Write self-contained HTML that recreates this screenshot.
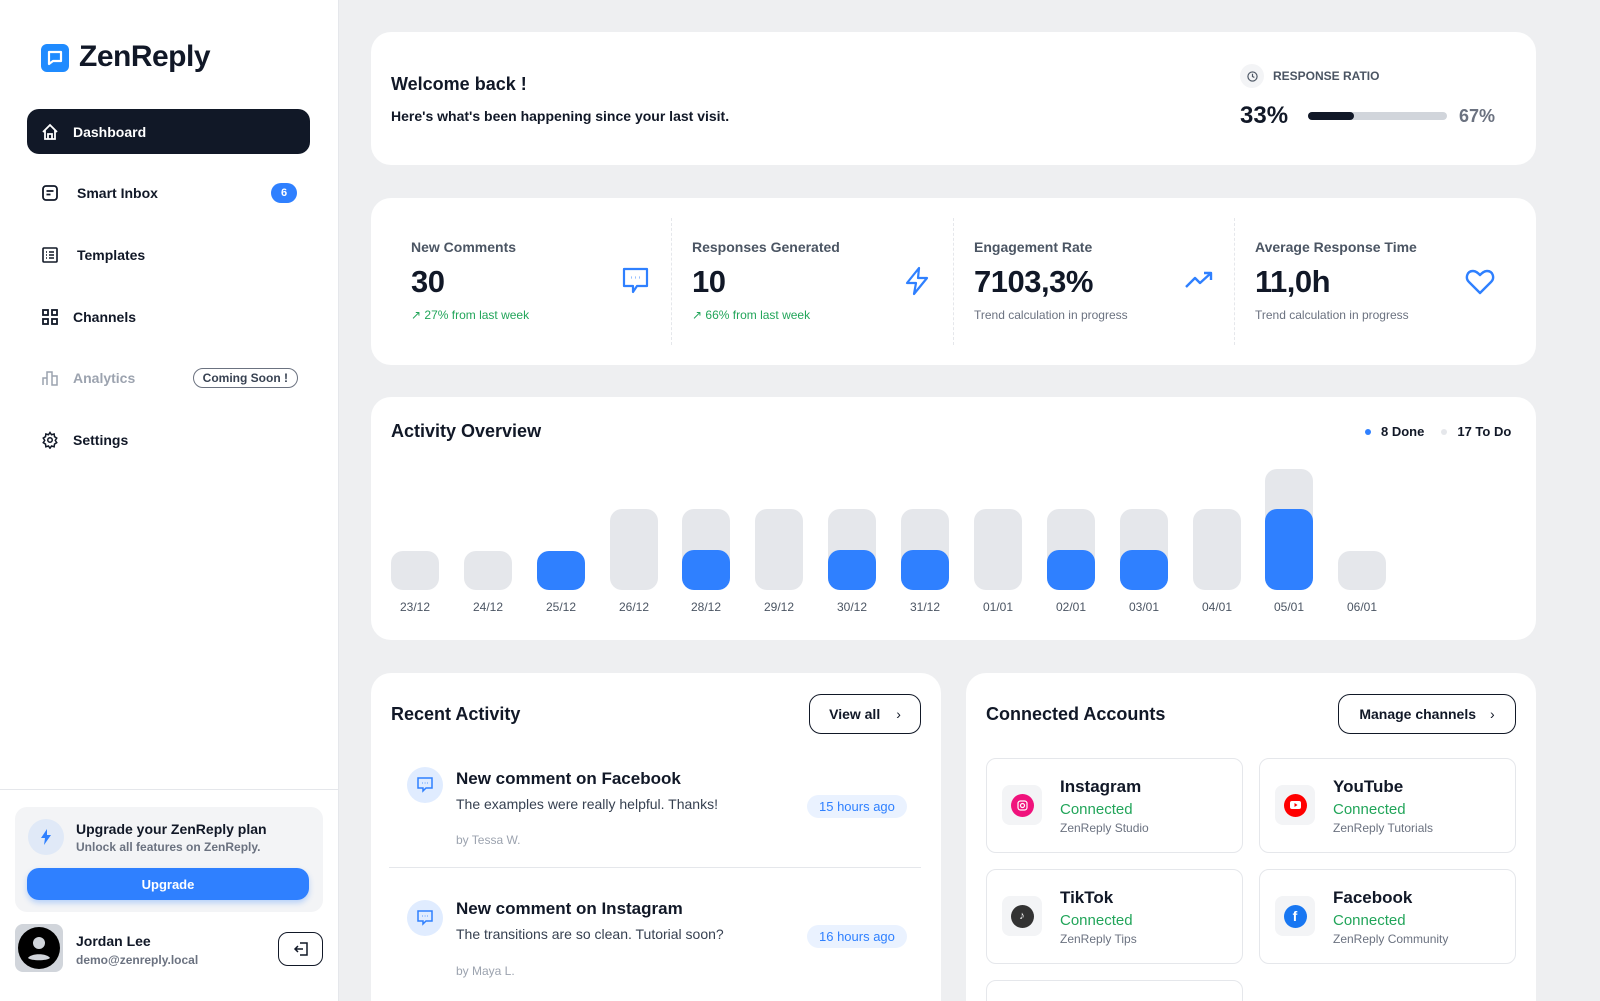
<!DOCTYPE html>
<html style="width:1600px;height:1001px;overflow:hidden"><head><meta charset="utf-8"><style>
*{box-sizing:border-box;margin:0;padding:0}
body{width:1600px;height:1001px;overflow:hidden;background:#eeeff1;font-family:"Liberation Sans",sans-serif;color:#111827;position:relative}
.abs{position:absolute}
.side{left:0;top:0;width:339px;height:1001px;background:#fff;border-right:1px solid #e5e7eb}
.nav{left:27px;width:283px;height:45px;display:flex;align-items:center;font-size:14px;font-weight:bold;color:#111827}
.nav svg{margin:0 14px 0 14px}
.card{background:#fff;border-radius:20px;position:absolute;overflow:hidden}
.h{font-weight:bold;font-size:18px}
.lbl{font-size:14px;color:#4b5563;font-weight:bold}
.big{font-size:31px;font-weight:bold;letter-spacing:-0.5px}
.grn{font-size:12px;color:#22a55a}
.gry{font-size:12px;color:#9ca3af}
.bar{position:absolute;width:48px;border-radius:12px;background:#e5e7eb}
.blue{background:#2f80ff}
.dl{position:absolute;top:600px;width:48px;text-align:center;font-size:12px;color:#4b5563}
.btn{position:absolute;border:1.5px solid #111827;border-radius:12px;height:40px;display:flex;align-items:center;justify-content:center;font-size:14px;font-weight:bold}
.acc{position:absolute;width:257px;height:95px;border:1px solid #e5e7eb;border-radius:10px;background:#fff}
.acc .ic{position:absolute;left:15px;top:26px;width:40px;height:40px;border-radius:8px;background:#f3f4f6;display:flex;align-items:center;justify-content:center}
.acc .t{position:absolute;left:73px;top:18px;font-size:17px;font-weight:bold}
.acc .c{position:absolute;left:73px;top:42px;font-size:15px;color:#22a55a}
.acc .s{position:absolute;left:73px;top:62px;font-size:12px;color:#6b7280}
.dot{width:23px;height:23px;border-radius:50%;display:flex;align-items:center;justify-content:center}
.ra{position:absolute;left:36px;width:36px;height:36px;border-radius:50%;background:#e0ecff;display:flex;align-items:center;justify-content:center}
.pill{position:absolute;left:436px;padding:4px 12px;background:#eaf2ff;color:#2f80ff;border-radius:12px;font-size:13px}
</style></head><body>
<div class="abs side">
 <div class="abs" style="left:41px;top:44px;width:28px;height:28px;border-radius:6px;background:#1f8bff;display:flex;align-items:center;justify-content:center"><svg width="18" height="18" viewBox="0 0 18 18"><path d="M3 3h12v9H7l-4 3z" fill="none" stroke="#fff" stroke-width="2.2" stroke-linejoin="round"/></svg></div>
 <div class="abs" style="left:79px;top:40px;font-size:30px;font-weight:bold;letter-spacing:-0.5px">ZenReply</div>
 <div class="abs nav" style="top:109px;background:#111827;border-radius:12px;color:#fff"><svg width="18" height="18" viewBox="0 0 18 18" fill="none" stroke="#fff" stroke-width="1.8"><path d="M2 9L9 2l7 7M4 7v9h10V7M7 16v-5h4v5"/></svg>Dashboard</div>
 <div class="abs nav" style="top:170px"><svg width="18" height="18" viewBox="0 0 18 18" fill="none" stroke="#111827" stroke-width="1.8"><rect x="2" y="2" width="14" height="14" rx="3"/><path d="M5.5 7h7M5.5 10.5h4"/></svg><span style="margin-left:4px">Smart Inbox</span><span style="position:absolute;right:13px;width:26px;height:20px;border-radius:10px;background:#2f80ff;color:#fff;font-size:11px;display:flex;align-items:center;justify-content:center">6</span></div>
 <div class="abs nav" style="top:232px"><svg width="18" height="18" viewBox="0 0 18 18" fill="none" stroke="#111827" stroke-width="1.6"><rect x="2" y="2" width="14" height="14" rx="1"/><path d="M5 6h1M8 6h5M5 9h1M8 9h5M5 12h1M8 12h5"/></svg><span style="margin-left:4px">Templates</span></div>
 <div class="abs nav" style="top:294px"><svg width="18" height="18" viewBox="0 0 18 18" fill="none" stroke="#111827" stroke-width="1.8"><rect x="2" y="2" width="5" height="5"/><rect x="11" y="2" width="5" height="5"/><rect x="2" y="11" width="5" height="5"/><rect x="11" y="11" width="5" height="5"/></svg>Channels</div>
 <div class="abs nav" style="top:355px;color:#9ca3af"><svg width="18" height="18" viewBox="0 0 18 18" fill="none" stroke="#9ca3af" stroke-width="1.5"><path d="M2 16V9h4v7M6 16V3h5v13M11 16V7h5v9z"/></svg>Analytics<span style="position:absolute;right:12px;border:1.2px solid #6b7280;border-radius:11px;padding:2px 9px;font-size:12px;color:#374151">Coming Soon !</span></div>
 <div class="abs nav" style="top:417px"><svg width="18" height="18" viewBox="0 0 24 24" fill="none" stroke="#111827" stroke-width="2"><circle cx="12" cy="12" r="3"/><path d="M12 2l2 3 3.5-1 .5 3.5 3 2-2 3 2 3-3 2-.5 3.5-3.5-1-2 3-2-3-3.5 1-.5-3.5-3-2 2-3-2-3 3-2 .5-3.5 3.5 1z"/></svg>Settings</div>
 <div class="abs" style="left:0;top:789px;width:339px;height:1px;background:#e5e7eb"></div>
 <div class="abs" style="left:15px;top:807px;width:308px;height:105px;background:#f3f4f6;border-radius:12px">
  <div class="abs" style="left:13px;top:12px;width:36px;height:36px;border-radius:50%;background:#e0e9f7;display:flex;align-items:center;justify-content:center"><svg width="12" height="16" viewBox="0 0 12 16"><path d="M7 0L1 9h4l-1 7 7-10H7z" fill="#2f80ff"/></svg></div>
  <div class="abs" style="left:61px;top:14px;font-size:14px;font-weight:bold">Upgrade your ZenReply plan</div>
  <div class="abs" style="left:61px;top:33px;font-size:12px;color:#6b7280;font-weight:bold">Unlock all features on ZenReply.</div>
  <div class="abs" style="left:12px;top:61px;width:282px;height:32px;border-radius:12px;background:#2f80ff;color:#fff;font-size:13px;font-weight:bold;display:flex;align-items:center;justify-content:center;box-shadow:0 3px 6px rgba(47,128,255,.3)">Upgrade</div>
 </div>
 <div class="abs" style="left:15px;top:924px;width:48px;height:48px;border-radius:8px;background:#d1d5db;display:flex;align-items:center;justify-content:center"><svg width="42" height="42" viewBox="0 0 42 42"><circle cx="21" cy="21" r="21" fill="#000"/><circle cx="21" cy="16" r="6" fill="#d1d5db"/><path d="M10 31c3-5 19-5 22 0c-3 3-19 3-22 0z" fill="#d1d5db"/></svg></div>
 <div class="abs" style="left:76px;top:933px;font-size:14px;font-weight:bold">Jordan Lee</div>
 <div class="abs" style="left:76px;top:953px;font-size:12px;color:#6b7280;font-weight:bold">demo@zenreply.local</div>
 <div class="abs" style="left:278px;top:932px;width:45px;height:34px;border:1.3px solid #111827;border-radius:10px;display:flex;align-items:center;justify-content:center"><svg width="16" height="16" viewBox="0 0 16 16" fill="none" stroke="#111827" stroke-width="1.5"><path d="M7 2h7v12H7M10 8H2M5 5L2 8l3 3"/></svg></div>
</div>

<div class="card" style="left:371px;top:32px;width:1165px;height:133px">
 <div class="abs h" style="left:20px;top:42px;font-size:18px">Welcome back !</div>
 <div class="abs" style="left:20px;top:76px;font-size:14px;font-weight:bold">Here's what's been happening since your last visit.</div>
 <div class="abs" style="left:869px;top:32px;width:24px;height:24px;border-radius:50%;background:#f3f4f6;display:flex;align-items:center;justify-content:center"><svg width="11" height="11" viewBox="0 0 12 12" fill="none" stroke="#4b5563" stroke-width="1.3"><circle cx="6" cy="6" r="5"/><path d="M6 3v3l2 1"/></svg></div>
 <div class="abs" style="left:902px;top:37px;font-size:12px;font-weight:bold;color:#4b5563">RESPONSE RATIO</div>
 <div class="abs" style="left:869px;top:70px;font-size:24px;font-weight:bold">33%</div>
 <div class="abs" style="left:937px;top:80px;width:139px;height:8px;border-radius:4px;background:#d1d5db"><div style="width:46px;height:8px;border-radius:4px;background:#111827"></div></div>
 <div class="abs" style="left:1088px;top:74px;font-size:18px;font-weight:bold;color:#6b7280">67%</div>
</div>

<div class="card" style="left:371px;top:198px;width:1165px;height:167px">
 <div class="abs" style="left:300px;top:20px;height:127px;border-left:1px dashed #e5e7eb"></div>
 <div class="abs" style="left:582px;top:20px;height:127px;border-left:1px dashed #e5e7eb"></div>
 <div class="abs" style="left:863px;top:20px;height:127px;border-left:1px dashed #e5e7eb"></div>
 <div class="abs lbl" style="left:40px;top:41px">New Comments</div><div class="abs big" style="left:40px;top:66px">30</div><div class="abs grn" style="left:40px;top:110px">↗ 27% from last week</div>
 <svg class="abs" style="left:250px;top:68px" width="29" height="30" viewBox="0 0 29 30" fill="none" stroke="#2f80ff" stroke-width="2.2" stroke-linejoin="round"><path d="M3 3h23v17H16l-4 6v-6H3z"/><path d="M10 11.5h.5M14.3 11.5h.5M18.5 11.5h.5"/></svg>
 <div class="abs lbl" style="left:321px;top:41px">Responses Generated</div><div class="abs big" style="left:321px;top:66px">10</div><div class="abs grn" style="left:321px;top:110px">↗ 66% from last week</div>
 <svg class="abs" style="left:533px;top:68px" width="26" height="30" viewBox="0 0 26 30" fill="none" stroke="#2f80ff" stroke-width="2.2" stroke-linejoin="round"><path d="M15 2L3 17h9l-2 11 13-16h-9z"/></svg>
 <div class="abs lbl" style="left:603px;top:41px">Engagement Rate</div><div class="abs big" style="left:603px;top:66px">7103,3%</div><div class="abs gry" style="left:603px;top:110px;color:#6b7280">Trend calculation in progress</div>
 <svg class="abs" style="left:813px;top:72px" width="30" height="20" viewBox="0 0 30 20" fill="none" stroke="#2f80ff" stroke-width="2.4" stroke-linejoin="round"><path d="M2 17l9-9 5 5 11-10M20 3h7v7"/></svg>
 <div class="abs lbl" style="left:884px;top:41px">Average Response Time</div><div class="abs big" style="left:884px;top:66px">11,0h</div><div class="abs gry" style="left:884px;top:110px;color:#6b7280">Trend calculation in progress</div>
 <svg class="abs" style="left:1094px;top:70px" width="30" height="27" viewBox="0 0 30 27" fill="none" stroke="#2f80ff" stroke-width="2.4" stroke-linejoin="round"><path d="M15 25L4 14C0 10 2 3 8 3c3 0 5 2 7 4 2-2 4-4 7-4 6 0 8 7 4 11z"/></svg>
</div>

<div class="card" style="left:371px;top:397px;width:1165px;height:243px"></div>
<div class="abs h" style="left:391px;top:421px">Activity Overview</div>
<div class="abs" style="left:1365px;top:424px;font-size:13px;font-weight:bold;display:flex;align-items:center"><span style="width:6px;height:6px;border-radius:50%;background:#2f80ff;margin-right:10px"></span>8 Done<span style="width:6px;height:6px;border-radius:50%;background:#e5e7eb;margin:0 10px 0 17px"></span>17 To Do</div>
<div class="bar" style="left:391px;top:551px;height:39px"></div>
<div class="bar" style="left:464px;top:551px;height:39px"></div>
<div class="bar blue" style="left:537px;top:551px;height:39px"></div>
<div class="bar" style="left:610px;top:509px;height:81px"></div>
<div class="bar" style="left:682px;top:509px;height:81px"></div><div class="bar blue" style="left:682px;top:550px;height:40px"></div>
<div class="bar" style="left:755px;top:509px;height:81px"></div>
<div class="bar" style="left:828px;top:509px;height:81px"></div><div class="bar blue" style="left:828px;top:550px;height:40px"></div>
<div class="bar" style="left:901px;top:509px;height:81px"></div><div class="bar blue" style="left:901px;top:550px;height:40px"></div>
<div class="bar" style="left:974px;top:509px;height:81px"></div>
<div class="bar" style="left:1047px;top:509px;height:81px"></div><div class="bar blue" style="left:1047px;top:550px;height:40px"></div>
<div class="bar" style="left:1120px;top:509px;height:81px"></div><div class="bar blue" style="left:1120px;top:550px;height:40px"></div>
<div class="bar" style="left:1193px;top:509px;height:81px"></div>
<div class="bar" style="left:1265px;top:469px;height:121px"></div><div class="bar blue" style="left:1265px;top:509px;height:81px"></div>
<div class="bar" style="left:1338px;top:551px;height:39px"></div>
<div class="dl" style="left:391px">23/12</div><div class="dl" style="left:464px">24/12</div><div class="dl" style="left:537px">25/12</div><div class="dl" style="left:610px">26/12</div><div class="dl" style="left:682px">28/12</div><div class="dl" style="left:755px">29/12</div><div class="dl" style="left:828px">30/12</div><div class="dl" style="left:901px">31/12</div><div class="dl" style="left:974px">01/01</div><div class="dl" style="left:1047px">02/01</div><div class="dl" style="left:1120px">03/01</div><div class="dl" style="left:1193px">04/01</div><div class="dl" style="left:1265px">05/01</div><div class="dl" style="left:1338px">06/01</div>

<div class="card" style="left:371px;top:673px;width:570px;height:328px;border-radius:20px 20px 0 0">
 <div class="abs h" style="left:20px;top:31px">Recent Activity</div>
 <div class="btn" style="left:438px;top:21px;width:112px">View all<span style="margin-left:16px;font-weight:normal">›</span></div>
 <div class="ra" style="top:94px"><svg width="18" height="18" viewBox="0 0 18 18" fill="none" stroke="#2f80ff" stroke-width="1.5"><path d="M2 2h14v10H10l-3 3v-3H2z"/><path d="M6 7h.5M8.8 7h.5M11.5 7h.5"/></svg></div>
 <div class="abs" style="left:85px;top:96px;font-size:17px;font-weight:bold">New comment on Facebook</div>
 <div class="abs" style="left:85px;top:123px;font-size:14px;color:#374151">The examples were really helpful. Thanks!</div>
 <div class="abs" style="left:85px;top:160px;font-size:12px;color:#9ca3af">by Tessa W.</div>
 <div class="pill" style="top:122px">15 hours ago</div>
 <div class="abs" style="left:18px;top:194px;width:532px;height:1px;background:#e5e7eb"></div>
 <div class="ra" style="top:227px"><svg width="18" height="18" viewBox="0 0 18 18" fill="none" stroke="#2f80ff" stroke-width="1.5"><path d="M2 2h14v10H10l-3 3v-3H2z"/><path d="M6 7h.5M8.8 7h.5M11.5 7h.5"/></svg></div>
 <div class="abs" style="left:85px;top:226px;font-size:17px;font-weight:bold">New comment on Instagram</div>
 <div class="abs" style="left:85px;top:253px;font-size:14px;color:#374151">The transitions are so clean. Tutorial soon?</div>
 <div class="abs" style="left:85px;top:291px;font-size:12px;color:#9ca3af">by Maya L.</div>
 <div class="pill" style="top:252px">16 hours ago</div>
</div>

<div class="card" style="left:966px;top:673px;width:570px;height:328px;border-radius:20px 20px 0 0">
 <div class="abs h" style="left:20px;top:31px">Connected Accounts</div>
 <div class="btn" style="left:372px;top:21px;width:178px">Manage channels<span style="margin-left:14px;font-weight:normal">›</span></div>
 <div class="acc" style="left:20px;top:85px"><div class="ic"><div class="dot" style="background:#f0127c"><svg width="11" height="11" viewBox="0 0 11 11" fill="none" stroke="#fff" stroke-width="1.2"><rect x="1" y="1" width="9" height="9" rx="2.5"/><circle cx="5.5" cy="5.5" r="2"/></svg></div></div><div class="t">Instagram</div><div class="c">Connected</div><div class="s">ZenReply Studio</div></div>
 <div class="acc" style="left:293px;top:85px"><div class="ic"><div class="dot" style="background:#f00"><svg width="11" height="8" viewBox="0 0 11 8"><rect width="11" height="8" rx="2" fill="#fff"/><path d="M4.5 2v4l3-2z" fill="#f00"/></svg></div></div><div class="t">YouTube</div><div class="c">Connected</div><div class="s">ZenReply Tutorials</div></div>
 <div class="acc" style="left:20px;top:196px"><div class="ic"><div class="dot" style="background:#333"><span style="color:#fff;font-size:11px;font-weight:bold">♪</span></div></div><div class="t">TikTok</div><div class="c">Connected</div><div class="s">ZenReply Tips</div></div>
 <div class="acc" style="left:293px;top:196px"><div class="ic"><div class="dot" style="background:#1877f2"><span style="color:#fff;font-size:14px;font-weight:bold">f</span></div></div><div class="t">Facebook</div><div class="c">Connected</div><div class="s">ZenReply Community</div></div>
 <div class="acc" style="left:20px;top:307px"></div>
</div>
</body></html>
